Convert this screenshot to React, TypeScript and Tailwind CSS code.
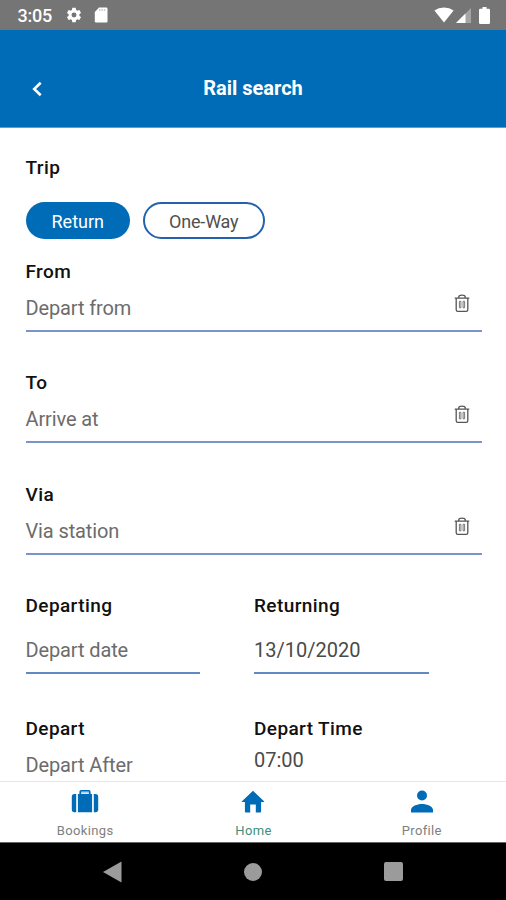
import type { ReactNode } from "react";

function StatusBar() {
  return (
    <div className="flex h-[30px] shrink-0 items-center justify-between bg-[#757575] pr-[16.500px] pl-[17.500px] text-white">
      <div className="flex items-center">
        <span className="w-[47.500px] pt-[1px] text-[18px] leading-[30px] font-medium tracking-[-0.2px]">3:05</span>
        <svg className="size-[18px]" viewBox="0 0 24 24" fill="currentColor">
          <path d="M19.14 12.94c.04-.3.06-.61.06-.94 0-.32-.02-.64-.07-.94l2.03-1.58c.18-.14.23-.41.12-.61l-1.92-3.32c-.12-.22-.37-.29-.59-.22l-2.39.96c-.5-.38-1.03-.7-1.62-.94l-.36-2.54c-.04-.24-.24-.41-.48-.41h-3.84c-.24 0-.43.17-.47.41l-.36 2.54c-.59.24-1.13.57-1.62.94l-2.39-.96c-.22-.08-.47 0-.59.22L2.74 8.87c-.12.21-.08.47.12.61l2.03 1.58c-.05.3-.09.63-.09.94s.02.64.07.94l-2.03 1.58c-.18.14-.23.41-.12.61l1.92 3.32c.12.22.37.29.59.22l2.39-.96c.5.38 1.03.7 1.62.94l.36 2.54c.05.24.24.41.48.41h3.84c.24 0 .44-.17.47-.41l.36-2.54c.59-.24 1.13-.56 1.62-.94l2.39.96c.22.08.47 0 .59-.22l1.92-3.32c.12-.22.07-.47-.12-.61l-2.01-1.58zM12 15.3A3.3 3.3 0 1 1 12 8.700a3.3 3.3 0 0 1 0 6.600z" />
        </svg>
        <svg className="ml-[11px] h-[16px] w-[14px]" viewBox="0 0 14 16">
          <path d="M5 .5h7.3q1.2 0 1.2 1.2v12.6q0 1.2-1.2 1.2H2q-1.2 0-1.2-1.2V5z" fill="#fff" />
          <path d="M5 2.200h1.400v1.600H5zM7.400 2.200h1.400v1.600H7.400zM9.800 2.200h1.400v1.600H9.800z" fill="#bbb" />
        </svg>
      </div>
      <div className="flex items-center">
        <svg className="h-[16px] w-[20px]" viewBox="0 0 20 16" fill="#fff">
          <path d="M10 15.4.4 3.4Q4.400.5 10 .5t9.600 2.900z" />
        </svg>
        <svg className="ml-[2px] h-[15px] w-[15px]" viewBox="0 0 15 15">
          <path d="M15 0v15H0z" fill="#fff" opacity=".35" />
          <path d="M9.500 5.500V15H0z" fill="#fff" />
        </svg>
        <svg className="ml-[8px] h-[17px] w-[11px]" viewBox="0 0 11 17" fill="#fff">
          <path d="M3.500 0h4v1.700h2.300q1.200 0 1.200 1.200v12.900q0 1.200-1.200 1.200H1.200Q0 17 0 15.800V2.900q0-1.200 1.200-1.200h2.300z" />
        </svg>
      </div>
    </div>
  );
}

function Header() {
  return (
    <header className="grid h-[98px] shrink-0 grid-cols-[60px_1fr_60px] border-b border-[#5c9fd2] bg-[#006cb7] pt-[46px] text-white">
      <svg className="mt-[5px] ml-[31px] h-[16px] w-[12px]" viewBox="0 0 12 16" fill="none" stroke="#fff" strokeWidth="2.600">
        <path d="M9.700 1.800 3.200 8l6.500 6.200" />
      </svg>
      <h1 className="text-center text-[20px] leading-[24px] font-bold">Rail search</h1>
    </header>
  );
}

function TrashIcon() {
  return (
    <svg className="h-[19px] w-[16px]" viewBox="0 0 16 19" fill="none" stroke="#555" strokeWidth="1.300">
      <path d="M.7 4.200h14.600M4.800 4V2.700Q5 1.200 8 1.200t3.200 1.500V4M2.200 4.400v11.300q0 1.700 1.700 1.700h8.200q1.700 0 1.700-1.700V4.400" />
      <path d="M5.400 7.300h1.500v6.500H5.400zM9.100 7.300h1.500v6.500H9.100z" strokeWidth=".8" />
    </svg>
  );
}

function Label({ children }: { children: ReactNode }) {
  return <div className="text-[19px] leading-[24px] font-medium tracking-[0.4px] text-[#111]">{children}</div>;
}

function StationField({ label, hint }: { label: string; hint: string }) {
  return (
    <div className="mb-[39.500px] h-[72px] border-b-2 border-[#7a94c8]">
      <Label>{label}</Label>
      <div className="mt-[12px] flex justify-between pr-[12px]">
        <span className="text-[20px] leading-[25px] tracking-[-0.12px] text-[#6c6c6c]">{hint}</span>
        <span className="-mt-[2px]"><TrashIcon /></span>
      </div>
    </div>
  );
}

function DateField({ label, value, filled }: { label: string; value: string; filled?: boolean }) {
  return (
    <div className="h-[79.500px] w-[174.500px] border-b-2 border-[#6289c3]">
      <Label>{label}</Label>
      <div className={`mt-[19.500px] text-[20px] leading-[25px] ${filled ? "text-[#4a4a4a]" : "tracking-[-0.12px] text-[#6c6c6c]"}`}>
        {value}
      </div>
    </div>
  );
}

function Tab({ label, active, children }: { label: string; active?: boolean; children: ReactNode }) {
  return (
    <div className="flex flex-1 flex-col items-center pt-[7px]">
      <svg className="h-[26px] w-[28px]" viewBox="0 0 28 26" fill="#006cb7">{children}</svg>
      <span className={`mt-[8px] text-[13px] leading-[16px] tracking-[0.35px] ${active ? "text-[#3f8f7a]" : "text-[#808080]"}`}>{label}</span>
    </div>
  );
}

export default function App() {
  return (
    <div className="flex h-[900px] w-[506px] flex-col overflow-hidden bg-white font-[Roboto,'Liberation_Sans',sans-serif]">
      <StatusBar />
      <Header />
      <main className="min-h-0 flex-1 overflow-hidden pt-[28px] pr-[24px] pl-[25.500px]">
        <Label>Trip</Label>
        <div className="mt-[22px] mb-[20.500px] flex gap-[12.500px]">
          <button className="h-[37px] w-[104.500px] rounded-full bg-[#006cb7] pt-[1px] text-[18px] text-white">Return</button>
          <button className="h-[37px] w-[122.500px] rounded-full border-2 border-[#2561ad] pt-[1px] text-[18px] tracking-[-0.2px] text-[#505050]">One-Way</button>
        </div>
        <StationField label="From" hint="Depart from" />
        <StationField label="To" hint="Arrive at" />
        <StationField label="Via" hint="Via station" />
        <div className="grid grid-cols-[228.500px_1fr]">
          <DateField label="Departing" value="Depart date" />
          <DateField label="Returning" value="13/10/2020" filled />
        </div>
        <div className="mt-[43.500px] grid grid-cols-[228.500px_1fr]">
          <div>
            <Label>Depart</Label>
            <div className="mt-[12px] text-[20px] leading-[25px] tracking-[-0.12px] text-[#6c6c6c]">Depart After</div>
          </div>
          <div>
            <Label>Depart Time</Label>
            <div className="mt-[7px] text-[20px] leading-[25px] text-[#4a4a4a]">07:00</div>
          </div>
        </div>
      </main>
      <nav className="flex h-[61px] shrink-0 border-t border-[#e6e6e6] bg-white pl-[1px]">
        <Tab label="Bookings">
          <path d="M9.200 4.500V2.700Q9.200 1.500 10.400 1.500h7.200q1.200 0 1.200 1.200V4.500z" fill="#b5d2ea" />
          <path d="M5.200 5v18.200H3.500Q.8 23.200.8 20.500V7.700Q.8 5 3.500 5zM22.800 5v18.200h1.700q2.700 0 2.700-2.700V7.700q0-2.700-2.700-2.700zM6.900 5h1.500V2.700q0-1.700 1.700-1.700h7.800q1.700 0 1.700 1.700V5h1.500v18.200H6.900zM10.100 5h7.800V2.600h-7.800z" />
        </Tab>
        <Tab label="Home" active>
          <path d="M14 1.800 3 12.200q-.7.900.4.900h2.500v9.300q0 1 1 1h4.300V15.500h5.600v7.900h4.300q1 0 1-1v-9.300h2.500q1.100 0 .4-.9z" />
        </Tab>
        <Tab label="Profile">
          <circle cx="14" cy="6.500" r="5" />
          <path d="M3 23.400v-2.300C3 17.300 9 15 14 15s11 2.300 11 6.100v2.300z" />
        </Tab>
      </nav>
      <div className="flex h-[58px] shrink-0 items-center justify-between border-t border-[#666] bg-black pr-[103px] pl-[103px]">
        <svg className="h-[22px] w-[19px]" viewBox="0 0 19 22" fill="#9b9b9b"><path d="M18.500.5v21L0 11z" /></svg>
        <div className="size-[18px] rounded-full bg-[#9b9b9b]" />
        <div className="size-[19px] rounded-[2px] bg-[#9b9b9b]" />
      </div>
    </div>
  );
}
